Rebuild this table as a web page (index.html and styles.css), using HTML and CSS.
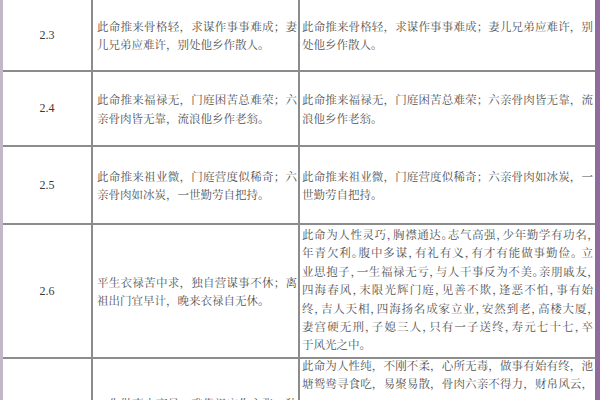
FILE: index.html
```html
<!DOCTYPE html>
<html lang="zh-CN">
<head>
<meta charset="utf-8">
<title>称骨表</title>
<link rel="stylesheet" href="styles.css">
</head>
<body>
<div class="sheet">
  <div class="grid">
    <div class="cell num">2.3</div>
    <div class="cell poem">
      <span class="ln j">此命推来骨格轻，求谋作事事难成；妻</span>
      <span class="ln">儿兄弟应难许，别处他乡作散人。</span>
    </div>
    <div class="cell note">
      <span class="ln j">此命推来骨格轻，求谋作事事难成；妻儿兄弟应难许，别</span>
      <span class="ln">处他乡作散人。</span>
    </div>

    <div class="cell num">2.4</div>
    <div class="cell poem">
      <span class="ln j">此命推来福禄无，门庭困苦总难荣；六</span>
      <span class="ln">亲骨肉皆无靠，流浪他乡作老翁。</span>
    </div>
    <div class="cell note">
      <span class="ln j">此命推来福禄无，门庭困苦总难荣；六亲骨肉皆无靠，流</span>
      <span class="ln">浪他乡作老翁。</span>
    </div>

    <div class="cell num">2.5</div>
    <div class="cell poem">
      <span class="ln j">此命推来祖业微，门庭营度似稀奇；六</span>
      <span class="ln">亲骨肉如冰炭，一世勤劳自把持。</span>
    </div>
    <div class="cell note">
      <span class="ln j">此命推来祖业微，门庭营度似稀奇；六亲骨肉如冰炭，一</span>
      <span class="ln">世勤劳自把持。</span>
    </div>

    <div class="cell num">2.6</div>
    <div class="cell poem">
      <span class="ln j">平生衣禄苦中求，独自营谋事不休；离</span>
      <span class="ln">祖出门宜早计，晚来衣禄自无休。</span>
    </div>
    <div class="cell note top dense">
      <span class="ln j">此命为人性灵巧，胸襟通达。志气高强，少年勤学有功名，</span>
      <span class="ln j">年青欠利。腹中多谋，有礼有义，有才有能做事勤俭。 立</span>
      <span class="ln j">业思抱子，一生福禄无亏，与人干事反为不美。亲朋戚友，</span>
      <span class="ln j">四海春风，末限光辉门庭，见善不欺，逢恶不怕，事有始</span>
      <span class="ln j">终，吉人天相，四海扬名成家立业，安然到老，高楼大厦，</span>
      <span class="ln j">妻宫硬无刑，子媳三人，只有一子送终，寿元七十七，卒</span>
      <span class="ln">于风光之中。</span>
    </div>

    <div class="cell num">2.7</div>
    <div class="cell poem">
      <span class="ln j">一生做事少商量，难靠祖宗作主张；独</span>
      <span class="ln">马单枪空做去，早年晚岁总无长。</span>
    </div>
    <div class="cell note top lift">
      <span class="ln j">此命为人性纯，不刚不柔，心所无毒，做事有始有终，池</span>
      <span class="ln j">塘鸳鸯寻食吃，易聚易散，骨肉六亲不得力，财帛风云，</span>
    </div>
  </div>
</div>
</body>
</html>
```

FILE: styles.css
```css
html, body {
  margin: 0;
  padding: 0;
  background: #ffffff;
}

body {
  width: 600px;
  height: 400px;
  overflow: hidden;
}

.sheet {
  box-sizing: border-box;
  width: 600px;
  border-left: 3px solid #c2b7c6;
  border-right: 5px solid #8f6c9d;
}

.grid {
  display: grid;
  grid-template-columns: 88px 205px 1fr;
  grid-template-rows: 70px 73px 76px 132px 106px;
  column-gap: 2px;
  row-gap: 2px;
  background: #8c8c8c;
}

.cell {
  background: #ffffff;
  display: flex;
  flex-direction: column;
  justify-content: center;
  font-family: "Noto Serif CJK SC", "Noto Sans CJK SC", serif;
  font-size: 11.5px;
  line-height: 18.4px;
  color: #525252;
}

.num {
  align-items: center;
  font-family: "Liberation Serif", "Times New Roman", serif;
  font-size: 12px;
  color: #3a3a3a;
}

.poem {
  padding: 0 1px 0 4px;
}

.note {
  padding: 0 2px 0 2px;
}

.top {
  justify-content: flex-start;
}

.lift {
  line-height: 18px;
  padding-bottom: 6px;
}

.lift .ln:first-child {
  margin-top: -3px;
}

.dense {
  font-feature-settings: "halt" 1;
}

.ln {
  display: block;
  text-align: left;
}

.ln.j {
  text-align: justify;
  text-align-last: justify;
}
```
